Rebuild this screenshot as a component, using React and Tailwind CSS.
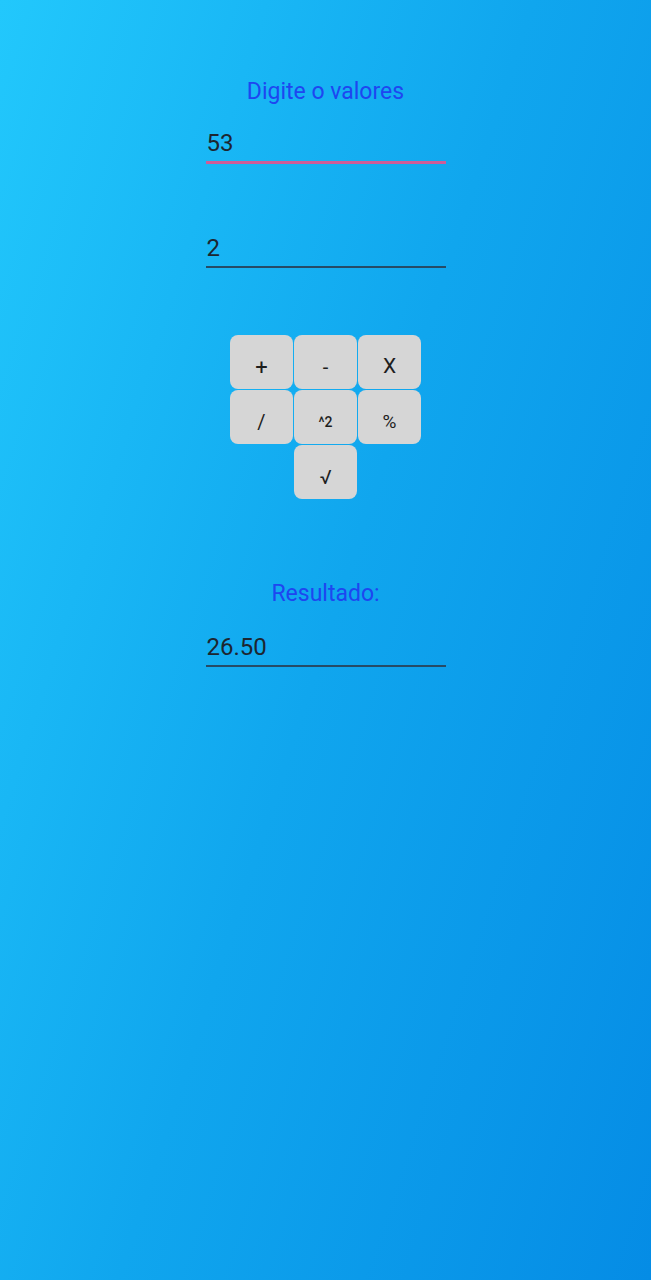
const keys = [
  { label: "+", cls: "text-[22px]" },
  { label: "-", cls: "text-[20px]" },
  { label: "X", cls: "text-[21px]" },
  { label: "/", cls: "text-[20px]" },
  { label: "^2", cls: "text-[14px] font-medium" },
  { label: "%", cls: "text-[19px]" },
];

const Field = ({ value, focused }) => (
  <div
    className={
      "w-[240px] h-[42px] flex items-center pt-[3px] pl-[1px] text-[24px] text-[#1d2630] " +
      (focused ? "border-b-[3px] border-[#cf5c98]" : "border-b-2 border-[#264b66]")
    }
  >
    {value}
  </div>
);

export default function App() {
  return (
    <div
      className="w-[651px] min-h-[1280px] bg-[linear-gradient(108deg,#22c8fc_0%,#10a6ee_50%,#058ce5_100%)] flex flex-col items-center pt-[77px]"
      style={{ fontFamily: "Roboto, 'Noto Sans', sans-serif" }}
    >
      <div className="h-[30px] leading-[30px] text-[23px] text-[#1e46f0]">Digite o valores</div>

      <div className="mt-[15px]">
        <Field value="53" focused />
      </div>
      <div className="mt-[62px]">
        <Field value="2" />
      </div>

      <div className="mt-[67px] grid grid-cols-[63px_63px_63px] gap-[1px]">
        {keys.map((k, i) => (
          <button
            key={i}
            className={"h-[54px] pt-[10px] rounded-[8px] bg-[#d6d6d6] text-[#1e1e1e] flex items-center justify-center " + k.cls}
          >
            {k.label}
          </button>
        ))}
        <div></div>
        <button className="h-[54px] pt-[10px] rounded-[8px] bg-[#d6d6d6] text-[#1e1e1e] text-[20px] flex items-center justify-center">
          √
        </button>
      </div>

      <div className="mt-[80px] h-[30px] leading-[30px] text-[23px] text-[#1e46f0]">Resultado:</div>
      <div className="mt-[16px]">
        <Field value="26.50" />
      </div>
    </div>
  );
}
